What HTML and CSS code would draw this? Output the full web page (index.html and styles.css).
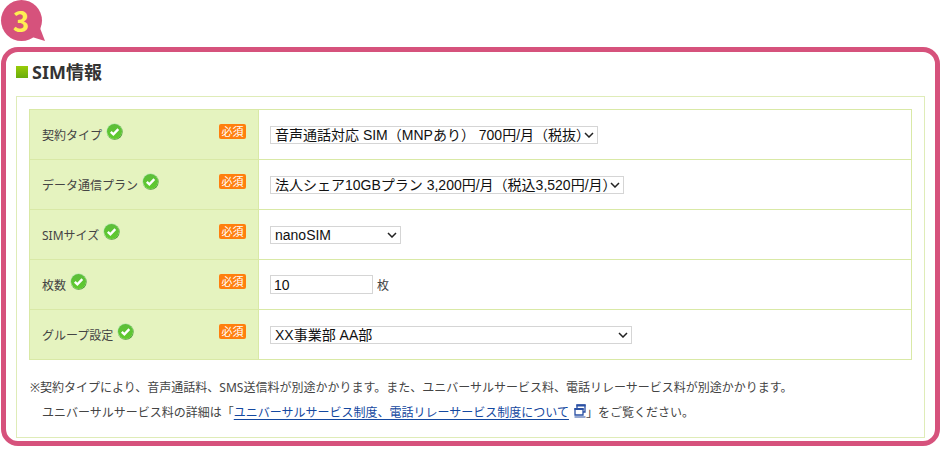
FILE: index.html
```html
<!DOCTYPE html>
<html lang="ja">

<head>
  <meta charset="UTF-8">
  <meta name="viewport" content="width=device-width, initial-scale=1.0">
  <title>SIM情報</title>
  <link rel="stylesheet" href="styles.css">
</head>

<body>
  <!-- Shared icon shapes -->
  <svg class="defs" aria-hidden="true">
    <defs>
      <linearGradient id="green" x1="0" y1="0" x2="0" y2="1">
        <stop offset="0" stop-color="#5cbd3b"/>
        <stop offset="1" stop-color="#5fcb2c"/>
      </linearGradient>
    </defs>
    <symbol id="check" viewBox="0 0 17 17">
      <circle cx="8.7" cy="8.8" r="8" fill="#4a9a37"/>
      <circle cx="8.2" cy="8.2" r="7.9" fill="#c9eebc"/>
      <circle cx="8.5" cy="8.5" r="7.5" fill="url(#green)"/>
      <path d="M4.8 8.8l2.6 2.5 4.9-5.1" fill="none" stroke="#fff" stroke-width="2.4"/>
    </symbol>
  </svg>

  <div class="step">
    <svg width="46" height="42" viewBox="0 0 46 42" aria-hidden="true">
      <circle cx="21.5" cy="20.5" r="20.5" fill="#d6527c"/>
      <path d="M40 28l5 13-13-4z" fill="#d6527c"/>
    </svg>
    <span>3</span>
  </div>

  <main class="frame">
    <h2>SIM情報</h2>
    <form class="box">
      <table>
        <tr>
          <th>
            <div class="label">
              <label for="type">契約タイプ</label>
              <svg class="check"><use href="#check"/></svg>
              <span class="required">必須</span>
            </div>
          </th>
          <td>
            <select id="type" class="w-type">
              <option>音声通話対応 SIM（MNPあり） 700円/月（税抜）</option>
            </select>
          </td>
        </tr>
        <tr>
          <th>
            <div class="label">
              <label for="plan">データ通信プラン</label>
              <svg class="check"><use href="#check"/></svg>
              <span class="required">必須</span>
            </div>
          </th>
          <td>
            <select id="plan" class="w-plan">
              <option>法人シェア10GBプラン 3,200円/月（税込3,520円/月）</option>
            </select>
          </td>
        </tr>
        <tr>
          <th>
            <div class="label">
              <label for="size">SIMサイズ</label>
              <svg class="check"><use href="#check"/></svg>
              <span class="required">必須</span>
            </div>
          </th>
          <td>
            <select id="size" class="w-size">
              <option>nanoSIM</option>
            </select>
          </td>
        </tr>
        <tr>
          <th>
            <div class="label">
              <label for="count">枚数</label>
              <svg class="check"><use href="#check"/></svg>
              <span class="required">必須</span>
            </div>
          </th>
          <td>
            <div class="count">
              <input type="text" id="count" value="10">
              <span>枚</span>
            </div>
          </td>
        </tr>
        <tr>
          <th>
            <div class="label">
              <label for="group">グループ設定</label>
              <svg class="check"><use href="#check"/></svg>
              <span class="required">必須</span>
            </div>
          </th>
          <td>
            <select id="group" class="w-group">
              <option>XX事業部 AA部</option>
            </select>
          </td>
        </tr>
      </table>

      <p class="note">※契約タイプにより、音声通話料、SMS送信料が別途かかります。また、ユニバーサルサービス料、電話リレーサービス料が別途かかります。<br>ユニバーサルサービス料の詳細は「<a href="#">ユニバーサルサービス制度、電話リレーサービス制度について</a><svg class="window" viewBox="0 0 12 14" aria-hidden="true"><path d="M3 4V1h8v7H9M1 5h8v6H1z" fill="none" stroke="#2a50a4" stroke-width="1.3"/><path d="M2.4 1.4h9.2M.4 5h9.2" stroke="#2a50a4" stroke-width="2"/><path d="M.5 13h11" stroke="#2a50a4"/></svg>」をご覧ください。</p>
    </form>
  </main>
</body>

</html>
```

FILE: styles.css
```css
* {
  box-sizing: border-box;
}

body {
  margin: 0;
  background: #fff;
  color: #444;
  font-family: "Noto Sans", "Noto Sans CJK JP", sans-serif;
  font-size: 12px;
}

.defs {
  position: absolute;
  width: 0;
  height: 0;
}

/* Step bubble */
.step {
  position: relative;
  height: 47px;
}

.step svg {
  display: block;
}

.step span {
  position: absolute;
  top: 0;
  left: 0;
  width: 42px;
  color: #ffee52;
  font-family: "Noto Sans CJK JP", sans-serif;
  font-size: 28px;
  font-weight: 700;
  line-height: 40px;
  text-align: center;
}

.frame {
  margin-left: 1px;
  padding: 8px 10px 3px;
  border: 5px solid #d6527c;
  border-radius: 17px;
}

h2 {
  display: flex;
  align-items: center;
  gap: 4px;
  margin: 0 0 12px;
  color: #333;
  font-size: 18px;
  line-height: 24px;
}

h2::before {
  content: "";
  width: 12px;
  height: 12px;
  background: linear-gradient(#99cc08, #68ac0c);
}

.box {
  padding: 12px;
  border: 1px solid #dfecb8;
}

table {
  width: 100%;
  border-collapse: collapse;
}

th,
td {
  height: 50px;
  border: 1px solid #d9e9a6;
  padding: 0 11px;
  text-align: left;
}

th {
  width: 229px;
  padding: 0 12px;
  background: #e5f3bf;
  font-weight: 400;
}

.label {
  display: flex;
  align-items: center;
  gap: 4px;
  padding-bottom: 6px;
}

.label label {
  padding-top: 6px;
}

.check {
  width: 17px;
  height: 17px;
}

.required {
  width: 27px;
  margin-left: auto;
  border-radius: 2px;
  background: #ff7f0e;
  color: #fff;
  font-size: 11px;
  line-height: 15px;
  text-align: center;
}

select,
input {
  display: block;
  border: 1px solid #d5d5d5;
  border-radius: 0;
  background-color: #fff;
  color: #111;
  font-family: "Liberation Sans", "Noto Sans CJK JP", sans-serif;
  font-size: 14px;
}

select {
  appearance: none;
  height: 18px;
  padding: 0 4px;
  line-height: 16px;
  background-image: url("data:image/svg+xml,%3Csvg xmlns='http://www.w3.org/2000/svg' width='10' height='6' fill='none' stroke='%23222' stroke-width='1.5'%3E%3Cpath d='M1 1l4 4 4-4'/%3E%3C/svg%3E");
  background-repeat: no-repeat;
  background-position: right 3px center;
}

.w-type {
  width: 328px;
}

.w-plan {
  width: 354px;
}

.w-size {
  width: 131px;
}

.w-group {
  width: 362px;
}

.count {
  display: flex;
  align-items: center;
  gap: 4px;
}

.count input {
  width: 103px;
  height: 19px;
  padding: 0 3px;
}

.note {
  margin: 15px 0 0;
  padding-left: 13px;
  text-indent: -12px;
  line-height: 25px;
}

a {
  color: #1448a0;
  text-underline-offset: 2px;
}

.window {
  width: 12px;
  height: 14px;
  margin-left: 5px;
  vertical-align: -1px;
}
```
